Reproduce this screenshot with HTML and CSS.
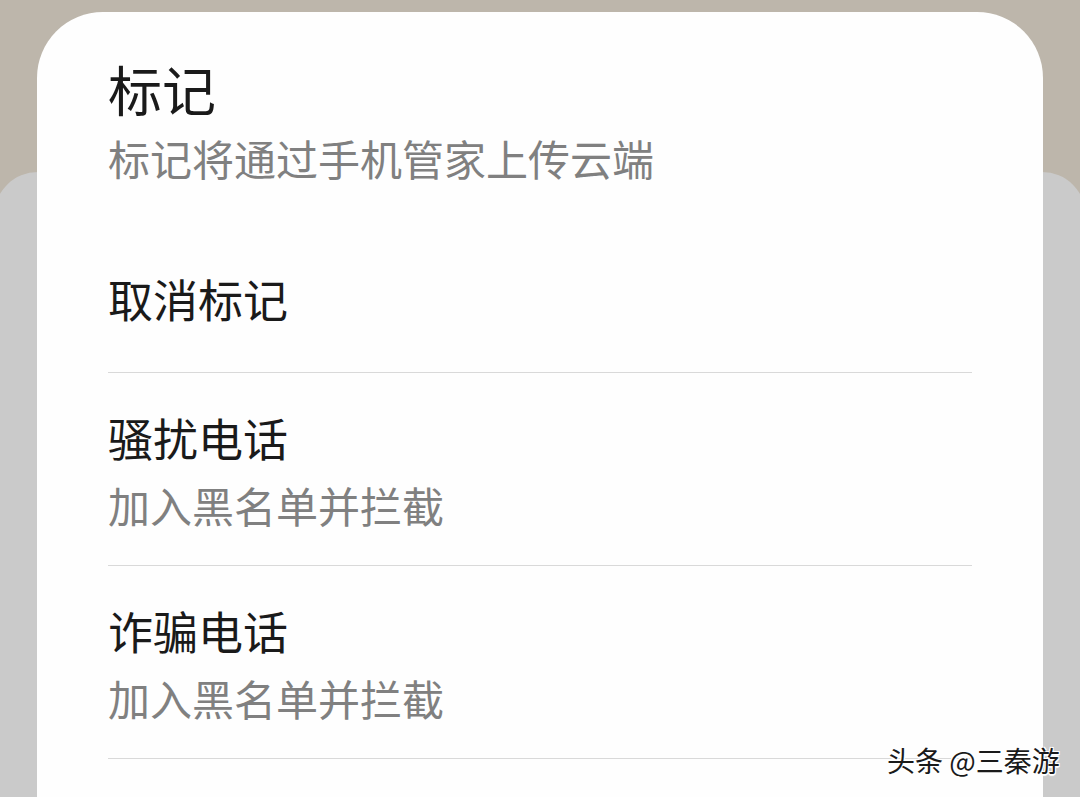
FILE: index.html
```html
<!DOCTYPE html>
<html lang="zh-CN">
<head>
<meta charset="utf-8">
<title>标记</title>
<link rel="stylesheet" href="styles.css">
</head>
<body>
<div class="stage">
  <div class="back-card"></div>
  <div class="sheet">
    <div class="header">
      <div class="title">标记</div>
      <div class="desc">标记将通过手机管家上传云端</div>
    </div>
    <div class="row row-cancel">
      <div class="row-title">取消标记</div>
    </div>
    <div class="row">
      <div class="row-title">骚扰电话</div>
      <div class="row-sub">加入黑名单并拦截</div>
    </div>
    <div class="row">
      <div class="row-title">诈骗电话</div>
      <div class="row-sub">加入黑名单并拦截</div>
    </div>
  </div>
  <div class="watermark">头条 @三秦游</div>
</div>
</body>
</html>
```
FILE: styles.css
```css
html, body {
  margin: 0;
  padding: 0;
}
body {
  width: 1080px;
  height: 797px;
  overflow: hidden;
  background: #bdb6ab;
  font-family: "Noto Sans CJK SC", "Noto Sans", sans-serif;
}
.stage {
  position: relative;
  width: 1080px;
  height: 797px;
  overflow: hidden;
}
.back-card {
  position: absolute;
  left: -6px;
  right: -6px;
  top: 172px;
  height: 800px;
  background: #cacaca;
  border-radius: 44px;
}
.sheet {
  position: relative;
  margin: 12px 37px 0 37px;
  height: 900px;
  background: #fefefe;
  border-radius: 66px 66px 0 0;
  padding: 0 71px;
  box-sizing: border-box;
}
.header {
  padding-top: 45px;
}
.title {
  font-size: 54px;
  line-height: 64px;
  color: #1a1a1a;
}
.desc {
  margin-top: 9px;
  font-size: 42px;
  line-height: 56px;
  color: #808080;
}
.row {
  padding: 35px 0 32px;
  border-bottom: 1px solid #d9d9d9;
}
.row-cancel {
  padding: 83px 0 43px;
}
.row-title {
  font-size: 45px;
  line-height: 60px;
  color: #1a1a1a;
}
.row-sub {
  margin-top: 9px;
  font-size: 42px;
  line-height: 56px;
  color: #808080;
}
.watermark {
  position: absolute;
  left: 887px;
  top: 740px;
  font-size: 28px;
  line-height: 40px;
  color: #1a1a1a;
  text-shadow: 1px 1px 0 #fff, -1px -1px 0 #fff, 1px -1px 0 #fff, -1px 1px 0 #fff, 0 2px 1px #fff;
  white-space: nowrap;
}
```
